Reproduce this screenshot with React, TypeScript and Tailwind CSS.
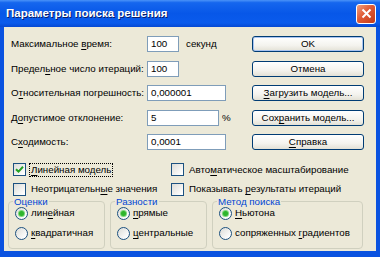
import React from 'react';

const U: React.FC<{ children: React.ReactNode }> = ({ children }) => <span className="underline underline-offset-[2px]">{children}</span>;

const Btn: React.FC<{ children: React.ReactNode; def?: boolean }> = ({ children, def }) => (
  <div
    className={`h-[16px] w-[112px] flex items-center justify-center rounded-[3px] border border-[#003C74] bg-[linear-gradient(180deg,#FFFFFF_0%,#F4F3EE_60%,#E3E1D6_100%)] leading-none whitespace-nowrap ${
      def ? 'shadow-[inset_0_0_0_1px_#A9C4F0]' : ''
    }`}
  >
    {children}
  </div>
);

const Field: React.FC<{ value: string; w: string }> = ({ value, w }) => (
  <div className={`h-[16px] ${w} shrink-0 border border-[#7F9DB9] bg-white flex items-center px-[3px] leading-none`}>{value}</div>
);

const Check: React.FC<{ checked?: boolean }> = ({ checked }) => (
  <span className="w-[13px] h-[13px] shrink-0 border border-[#1C5180] bg-[linear-gradient(135deg,#DCDCD7_0%,#FFFFFF_90%)] flex items-center justify-center">
    {checked && (
      <svg width="9" height="9" viewBox="0 0 9 9">
        <path d="M1 4.2 L3.5 6.6 L8 1.8" stroke="#21A121" strokeWidth="2" fill="none" />
      </svg>
    )}
  </span>
);

const Radio: React.FC<{ on?: boolean }> = ({ on }) => (
  <span className="w-[13px] h-[13px] shrink-0 rounded-full border border-[#1C5180] bg-[linear-gradient(135deg,#DCDCD7_0%,#FFFFFF_85%)] flex items-center justify-center">
    {on && <span className="w-[5px] h-[5px] rounded-full bg-[#2EB52C] shadow-[0_0_0_1px_#7BD77A]" />}
  </span>
);

const Group: React.FC<{ title: string; w: string; children: React.ReactNode }> = ({ title, w, children }) => (
  <fieldset className={`${w} h-[52px] shrink-0 border border-[#D0D0BF] rounded-[4px] px-[4px]`}>
    <legend className="px-[1px] leading-none text-[#0046D5]">{title}</legend>
    <div className="flex flex-col gap-[7px] pt-[0px] pl-[2px]">{children}</div>
  </fieldset>
);

export default function App() {
  return (
    <div className="w-[380px] h-[257px] bg-[#0A52E0] flex flex-col overflow-hidden font-['Liberation_Sans',Arial,sans-serif] text-black">
      <div className="h-[27px] shrink-0 flex items-center justify-between pl-[6px] pr-[4px] bg-[linear-gradient(180deg,#4A93F8_0%,#1566EE_10%,#0757E8_50%,#0A5BEC_85%,#0548D2_100%)]">
        <span className="text-white font-bold text-[11.5px] [text-shadow:1px_1px_0_#0A1E6A]">Параметры поиска решения</span>
        <div className="w-[20px] h-[20px] rounded-[3px] border border-white bg-[linear-gradient(135deg,#F0A080_0%,#E05A35_45%,#C33A18_100%)] flex items-center justify-center">
          <svg width="11" height="11" viewBox="0 0 11 11">
            <path d="M1.5 1.5 L9.5 9.5 M9.5 1.5 L1.5 9.5" stroke="white" strokeWidth="2" />
          </svg>
        </div>
      </div>

      <div className="flex-1 mx-[4px] mb-[6px] bg-[#ECE9D8] text-[9.75px] leading-none whitespace-nowrap">
        <div className="flex pt-[9px] pl-[7px] pr-[12px]">
          <div className="flex flex-col gap-[8.5px]">
            <div className="flex items-center">
              <span className="w-[136px] shrink-0">Максимальное <U>в</U>ремя:</span>
              <Field value="100" w="w-[32px]" />
              <span className="ml-[7px]">секунд</span>
            </div>
            <div className="flex items-center">
              <span className="w-[136px] shrink-0">Предел<U>ь</U>ное число итераций:</span>
              <Field value="100" w="w-[32px]" />
            </div>
            <div className="flex items-center">
              <span className="w-[136px] shrink-0">О<U>т</U>носительная погрешность:</span>
              <Field value="0,000001" w="w-[79px]" />
            </div>
            <div className="flex items-center">
              <span className="w-[136px] shrink-0">Д<U>о</U>пустимое отклонение:</span>
              <Field value="5" w="w-[72px]" />
              <span className="ml-[3px]">%</span>
            </div>
            <div className="flex items-center">
              <span className="w-[136px] shrink-0">С<U>х</U>одимость:</span>
              <Field value="0,0001" w="w-[79px]" />
            </div>
          </div>
          <div className="ml-auto flex flex-col gap-[8.5px]">
            <Btn def>OK</Btn>
            <Btn>Отмена</Btn>
            <Btn><U>З</U>агрузить модель...</Btn>
            <Btn>Сох<U>р</U>анить модель...</Btn>
            <Btn><U>С</U>правка</Btn>
          </div>
        </div>

        <div className="grid grid-cols-[158px_1fr] gap-y-[6px] pl-[9px] mt-[13px]">
          <div className="flex items-center gap-[3px]">
            <Check checked />
            <span className="border border-dotted border-black px-[1px] py-[1px]"><U>Л</U>инейная модель</span>
          </div>
          <div className="flex items-center gap-[5px]">
            <Check />
            <span>Авто<U>м</U>атическое масштабирование</span>
          </div>
          <div className="flex items-center gap-[5px]">
            <Check />
            <span>Неотрицательн<U>ы</U>е значения</span>
          </div>
          <div className="flex items-center gap-[5px]">
            <Check />
            <span>Показывать <U>р</U>езультаты итераций</span>
          </div>
        </div>

        <div className="flex gap-[5px] pl-[4px] mt-[1px]">
          <Group title="Оценки" w="w-[97px]">
            <div className="flex items-center gap-[3px]"><Radio on /><span>лин<U>е</U>йная</span></div>
            <div className="flex items-center gap-[3px]"><Radio /><span><U>к</U>вадратичная</span></div>
          </Group>
          <Group title="Разности" w="w-[97px]">
            <div className="flex items-center gap-[3px]"><Radio on /><span><U>п</U>рямые</span></div>
            <div className="flex items-center gap-[3px]"><Radio /><span><U>ц</U>ентральные</span></div>
          </Group>
          <Group title="Метод поиска" w="w-[151px]">
            <div className="flex items-center gap-[3px]"><Radio on /><span><U>Н</U>ьютона</span></div>
            <div className="flex items-center gap-[3px]"><Radio /><span>сопряженных <U>г</U>радиентов</span></div>
          </Group>
        </div>
      </div>
    </div>
  );
}
